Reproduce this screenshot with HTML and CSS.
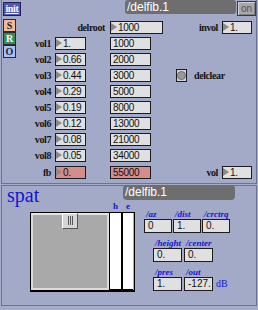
FILE: index.html
```html
<!DOCTYPE html>
<html>
<head>
<meta charset="utf-8">
<link rel="stylesheet" href="styles.css">
</head>
<body>
<div class="patch top">
  <div class="side">
    <div class="init">init</div>
    <div class="sro">
      <div class="sq s">S</div>
      <div class="sq r">R</div>
      <div class="sq o">O</div>
    </div>
  </div>
  <div class="main">
    <div class="head">
      <div class="title">/delfib.1</div>
      <div class="onbtn">on</div>
    </div>
    <div class="rows">
      <div class="row">
        <span class="lbl l-delroot">delroot</span>
        <span class="num arrow w-root">1000</span>
        <span class="lbl l-invol">invol</span>
        <span class="num arrow w-side">1.</span>
      </div>
      <div class="row"><span class="lbl l-vol">vol1</span><span class="num arrow w-vol">1.</span><span class="num w-fib">1000</span></div>
      <div class="row"><span class="lbl l-vol">vol2</span><span class="num arrow w-vol">0.66</span><span class="num w-fib">2000</span></div>
      <div class="row">
        <span class="lbl l-vol">vol3</span><span class="num arrow w-vol">0.44</span><span class="num w-fib">3000</span>
        <span class="toggle"><span class="dot"></span></span>
        <span class="lbl l-clear">delclear</span>
      </div>
      <div class="row"><span class="lbl l-vol">vol4</span><span class="num arrow w-vol">0.29</span><span class="num w-fib">5000</span></div>
      <div class="row"><span class="lbl l-vol">vol5</span><span class="num arrow w-vol">0.19</span><span class="num w-fib">8000</span></div>
      <div class="row"><span class="lbl l-vol">vol6</span><span class="num arrow w-vol">0.12</span><span class="num w-fib">13000</span></div>
      <div class="row"><span class="lbl l-vol">vol7</span><span class="num arrow w-vol">0.08</span><span class="num w-fib">21000</span></div>
      <div class="row"><span class="lbl l-vol">vol8</span><span class="num arrow w-vol">0.05</span><span class="num w-fib">34000</span></div>
      <div class="row row-fb">
        <span class="lbl l-vol">fb</span><span class="num arrow w-vol pink">0.</span><span class="num w-fib pink">55000</span>
        <span class="lbl l-outvol">vol</span><span class="num arrow w-side">1.</span>
      </div>
    </div>
  </div>
</div>

<div class="patch bottom">
  <div class="bhead">
    <div class="spat">spat</div>
    <div class="title title2">/delfib.1</div>
  </div>
  <div class="bbody">
    <div class="padcol">
      <div class="helabels"><span class="hl">h</span><span class="el">e</span></div>
      <div class="pad">
        <div class="xy"><div class="handle"><i></i><i></i><i></i></div></div>
        <div class="sl sl-h"></div>
        <div class="sl sl-e"></div>
      </div>
    </div>
    <div class="fields">
      <div class="frow">
        <div class="f f28"><span class="fl">/az</span><span class="fb">0</span></div>
        <div class="f f28"><span class="fl">/dist</span><span class="fb">1.</span></div>
        <div class="f f28"><span class="fl">/crctrq</span><span class="fb">0.</span></div>
      </div>
      <div class="frow indent">
        <div class="f f29"><span class="fl">/height</span><span class="fb">0.</span></div>
        <div class="f f29"><span class="fl">/center</span><span class="fb">0.</span></div>
      </div>
      <div class="frow indent">
        <div class="f f29"><span class="fl">/pres</span><span class="fb">1.</span></div>
        <div class="f f29"><span class="fl">/out</span><span class="fb">-127.</span></div>
        <span class="db">dB</span>
      </div>
    </div>
  </div>
</div>
</body>
</html>
```

FILE: styles.css
```css
* { box-sizing: border-box; margin: 0; padding: 0; }
html, body { width: 258px; height: 310px; overflow: hidden; }
body {
  background: #a4acca;
  font-family: "Liberation Sans", Arial, sans-serif;
  color: #111;
}

.patch {
  margin-left: 1px;
  width: 256px;
  border: 1px solid #6b7396;
  background: #a2aac8;
}

/* ---------- top panel ---------- */
.top {
  border-top: none;
  height: 184px;
  display: flex;
}
.side {
  width: 19px;
  padding-left: 1px;
  padding-top: 2px;
}
.init {
  width: 18px;
  height: 14px;
  background: #5454b4;
  border: 1px solid #22224a;
  color: #fff;
  font: bold 10px/11px "Liberation Serif", serif;
  text-align: center;
  text-decoration: underline;
  letter-spacing: -0.3px;
}
.sro { margin-top: 3px; display: flex; flex-direction: column; gap: 0; }
.sq {
  width: 13px;
  height: 13px;
  border: 1px solid #2a2a2a;
  font: bold 10px/11px "Liberation Serif", serif;
  text-align: center;
}
.sq + .sq { margin-top: 0; }
.s { background: #f4b898; color: #222; }
.r { background: #3c8c58; color: #fff; }
.o { background: #a8c0f8; color: #222; }

.main { width: 235px; display: flex; flex-direction: column; }
.head { height: 21px; display: flex; align-items: flex-start; }
.title {
  margin-left: 104px;
  width: 111px;
  height: 14px;
  background: #6e6e6e;
  border-radius: 3px;
  color: #fff;
  font: 12px/14px "Liberation Sans", Arial, sans-serif;
  padding-left: 2px;
}
.onbtn {
  margin-left: 1px;
  margin-top: 1px;
  width: 19px;
  height: 15px;
  background: #a9a9a9;
  border: 1px solid #3a3a3a;
  box-shadow: inset 1px 1px 0 #d0d0d0, inset -1px -1px 0 #808080;
  color: #505050;
  font: 10px/13px "Liberation Sans", Arial, sans-serif;
  text-align: center;
}

.rows { display: flex; flex-direction: column; gap: 3px; }
.row { height: 13px; display: flex; align-items: center; }
.row-fb { margin-top: 1px; }
.lbl {
  font: bold 10px/13px "Liberation Serif", serif;
  letter-spacing: -0.4px;
  text-align: right;
  color: #141414;
  white-space: nowrap;
}
.l-vol { width: 30px; margin-right: 4px; }
.l-delroot { width: 84px; margin-right: 5px; }
.l-invol { width: 22px; margin-left: 33px; margin-right: 4px; }
.l-outvol { width: 67px; margin-right: 4px; }
.l-clear { text-align: left; margin-left: 7px; }

.num {
  position: relative;
  height: 13px;
  border: 1px solid #1c1c1c;
  background: #e0e0e0;
  font: 10px/11px "Liberation Sans", Arial, sans-serif;
  letter-spacing: -0.3px;
  padding-left: 2px;
  white-space: nowrap;
  overflow: hidden;
}
.num.arrow { padding-left: 7px; }
.num.arrow::before {
  content: "";
  position: absolute;
  left: 0;
  top: 1px;
  width: 0;
  height: 0;
  border-left: 6px solid #8a8a8a;
  border-top: 4.5px solid transparent;
  border-bottom: 4.5px solid transparent;
}
.w-root { width: 53px; }
.w-side { width: 30px; }
.w-vol { width: 31px; margin-right: 24px; }
.w-fib { width: 41px; }
.pink { background: #d48c8c; }

.toggle {
  margin-left: 25px;
  width: 11px;
  height: 13px;
  border: 1px solid #1c1c1c;
  background: #d4d4d4;
  display: flex;
  align-items: center;
  justify-content: center;
}
.dot {
  width: 9px;
  height: 9px;
  border-radius: 50%;
  background: #9a9a9a;
  border: 1px solid #6a6a6a;
}

/* ---------- bottom panel ---------- */
.bottom {
  margin-top: 1px;
  height: 121px;
}
.bhead { height: 16px; display: flex; align-items: flex-start; }
.spat {
  width: 121px;
  padding-left: 5px;
  margin-top: 1px;
  font: 20px/16px "Liberation Serif", serif;
  color: #1414d4;
}
.title2 {
  margin-left: 0;
  width: 112px;
  height: 15px;
  margin-top: -1px;
  line-height: 14px;
  border-radius: 4px;
}
.bbody { display: flex; }
.padcol { margin-left: 28px; width: 105px; }
.helabels { height: 10px; position: relative; }
.hl, .el {
  position: absolute;
  top: 0;
  font: bold 9px/9px "Liberation Serif", serif;
  color: #1414d4;
}
.hl { left: 83px; }
.el { left: 96px; }
.pad {
  display: flex;
  width: 105px;
  height: 80px;
  border: 1px solid #000;
  border-bottom-width: 2px;
}
.xy {
  position: relative;
  width: 78px;
  background: #a9a9a9;
  border: 2px solid #dcdcdc;
  border-top-color: #e4e4e4;
  border-bottom-width: 2px;
}
.handle {
  position: absolute;
  left: 29px;
  top: -2px;
  width: 16px;
  height: 16px;
  background: #d6d6d6;
  border: 1px solid #fff;
  border-right-color: #555;
  border-bottom-color: #555;
  display: flex;
  justify-content: center;
  gap: 1px;
  padding-top: 2px;
}
.handle i {
  display: block;
  width: 1px;
  height: 9px;
  background: #555;
}
.sl { background: #fff; border-left: 1px solid #000; border-bottom: 1px solid #000; }
.sl-h { width: 12px; }
.sl-e { width: 12px; border-left-width: 2px; }

.fields { margin-left: 9px; display: flex; flex-direction: column; margin-top: 8px; gap: 6px; }
.frow { display: flex; gap: 1px; align-items: flex-end; }
.frow.indent { margin-left: 9px; gap: 2px; }
.f { display: flex; flex-direction: column; }
.f28 { width: 28px; }
.f29 { width: 29px; }
.fl {
  height: 9px;
  padding-left: 2px;
  font: italic bold 9px/8px "Liberation Serif", serif;
  color: #1414d4;
  white-space: nowrap;
}
.fb {
  height: 14px;
  border: 1px solid #1c1c1c;
  background: #e0e0e0;
  font: 10px/12px "Liberation Sans", Arial, sans-serif;
  padding-left: 3px;
  white-space: nowrap;
}
.db {
  margin-left: 1px;
  margin-bottom: 2px;
  font: 10px/10px "Liberation Serif", serif;
  color: #1414d4;
}
```
